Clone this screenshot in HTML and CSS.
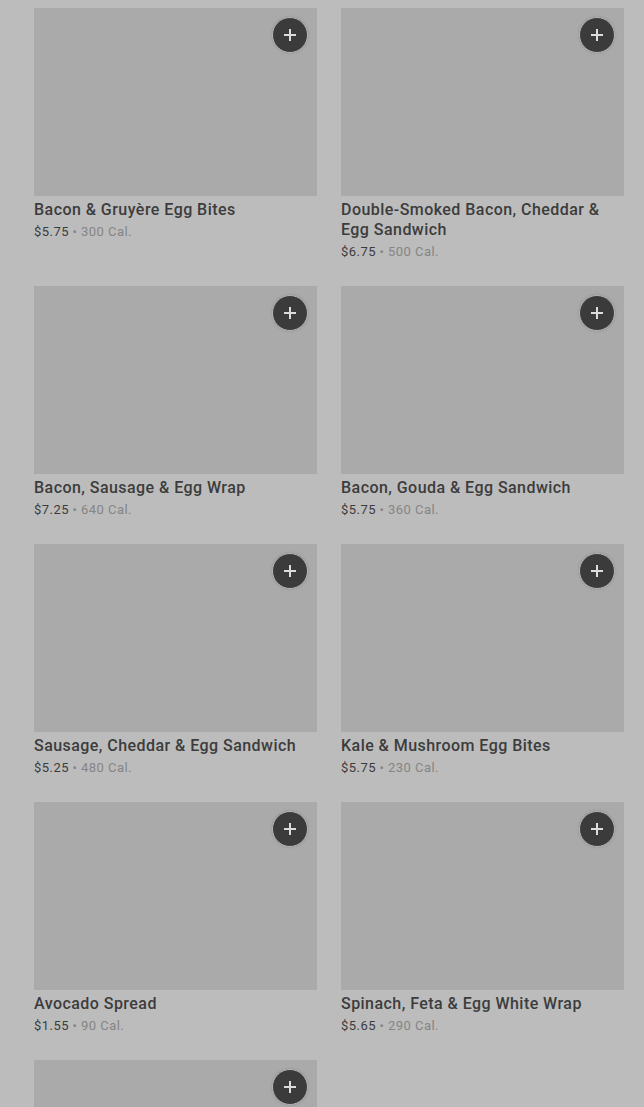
FILE: index.html
```html
<!DOCTYPE html>
<html lang="en">
<head>
<meta charset="utf-8">
<link rel="stylesheet" href="styles.css">
<title>Menu</title>
</head>
<body>
<main class="grid">
  <div class="card"><div class="img"><button class="add"><svg viewBox="0 0 14 14" width="14" height="14"><path d="M7 1v12M1 7h12"/></svg></button></div><div class="title">Bacon &amp; Gruyère Egg Bites</div><div class="meta"><span class="price">$5.75</span> • 300 Cal.</div></div>
  <div class="card"><div class="img"><button class="add"><svg viewBox="0 0 14 14" width="14" height="14"><path d="M7 1v12M1 7h12"/></svg></button></div><div class="title">Double-Smoked Bacon, Cheddar &amp; Egg Sandwich</div><div class="meta"><span class="price">$6.75</span> • 500 Cal.</div></div>
  <div class="card"><div class="img"><button class="add"><svg viewBox="0 0 14 14" width="14" height="14"><path d="M7 1v12M1 7h12"/></svg></button></div><div class="title">Bacon, Sausage &amp; Egg Wrap</div><div class="meta"><span class="price">$7.25</span> • 640 Cal.</div></div>
  <div class="card"><div class="img"><button class="add"><svg viewBox="0 0 14 14" width="14" height="14"><path d="M7 1v12M1 7h12"/></svg></button></div><div class="title">Bacon, Gouda &amp; Egg Sandwich</div><div class="meta"><span class="price">$5.75</span> • 360 Cal.</div></div>
  <div class="card"><div class="img"><button class="add"><svg viewBox="0 0 14 14" width="14" height="14"><path d="M7 1v12M1 7h12"/></svg></button></div><div class="title">Sausage, Cheddar &amp; Egg Sandwich</div><div class="meta"><span class="price">$5.25</span> • 480 Cal.</div></div>
  <div class="card"><div class="img"><button class="add"><svg viewBox="0 0 14 14" width="14" height="14"><path d="M7 1v12M1 7h12"/></svg></button></div><div class="title">Kale &amp; Mushroom Egg Bites</div><div class="meta"><span class="price">$5.75</span> • 230 Cal.</div></div>
  <div class="card"><div class="img"><button class="add"><svg viewBox="0 0 14 14" width="14" height="14"><path d="M7 1v12M1 7h12"/></svg></button></div><div class="title">Avocado Spread</div><div class="meta"><span class="price">$1.55</span> • 90 Cal.</div></div>
  <div class="card"><div class="img"><button class="add"><svg viewBox="0 0 14 14" width="14" height="14"><path d="M7 1v12M1 7h12"/></svg></button></div><div class="title">Spinach, Feta &amp; Egg White Wrap</div><div class="meta"><span class="price">$5.65</span> • 290 Cal.</div></div>
  <div class="card"><div class="img"><button class="add"><svg viewBox="0 0 14 14" width="14" height="14"><path d="M7 1v12M1 7h12"/></svg></button></div></div>
</main>
</body>
</html>
```
FILE: styles.css
```css
html, body {
  margin: 0;
  background: #bcbcbc;
}
body {
  font-family: Roboto, "Liberation Sans", sans-serif;
  color: #3d3d3d;
  overflow: hidden;
  height: 1107px;
}
.grid {
  display: grid;
  grid-template-columns: 283px 283px;
  column-gap: 24px;
  row-gap: 24px;
  padding: 8px 20px 0 34px;
}
.img {
  position: relative;
  height: 188px;
  background: #aaaaaa;
}
.add {
  position: absolute;
  top: 9px;
  right: 9px;
  width: 36px;
  height: 36px;
  border-radius: 50%;
  border: 1px solid #b5b5b5;
  background: #3b3b3b;
  padding: 0;
  display: flex;
  align-items: center;
  justify-content: center;
  box-shadow: 0 0 3px rgba(0,0,0,0.15);
}
.add svg {
  stroke: #dcdcdc;
  stroke-width: 2;
  fill: none;
}
.title {
  margin-top: 4px;
  font-size: 16px;
  line-height: 20px;
  font-weight: 500;
  letter-spacing: 0.45px;
  color: #3c3c3c;
}
.meta {
  margin-top: 2px;
  font-size: 13px;
  line-height: 20px;
  letter-spacing: 0.45px;
  color: #858585;
}
.price {
  color: #3c3c3c;
}
```
